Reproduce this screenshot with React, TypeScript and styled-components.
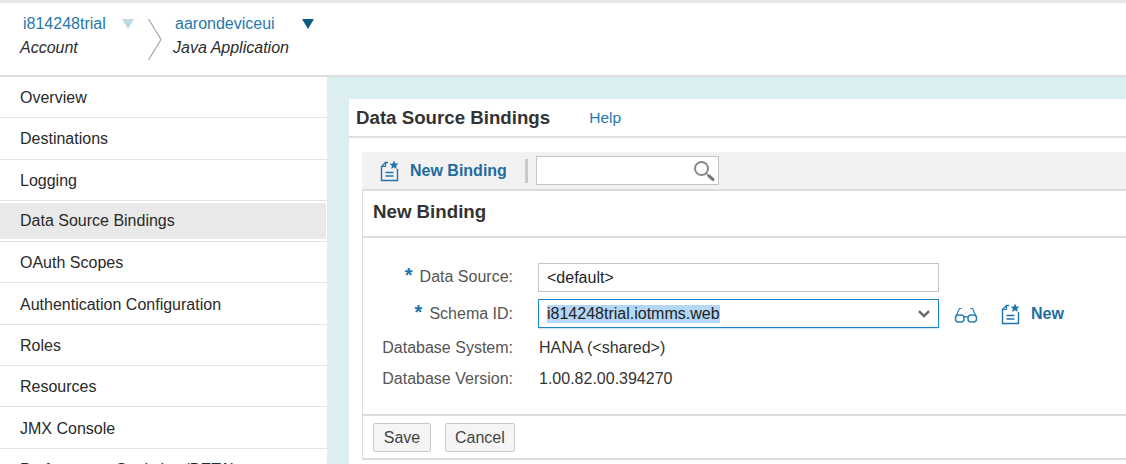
import React from 'react'
import styled, { createGlobalStyle } from 'styled-components'

const menuItems = [
  'Overview',
  'Destinations',
  'Logging',
  'Data Source Bindings',
  'OAuth Scopes',
  'Authentication Configuration',
  'Roles',
  'Resources',
  'JMX Console',
  'Performance Statistics (BETA)',
]

function NewDocIcon() {
  return (
    <svg width="22" height="22" viewBox="0 0 22 22" fill="none" stroke="#1f74ab" strokeWidth="1.4">
      <path d="M9 2.5H6.5L2.5 6.5V20.5H18.5V9" />
      <path d="M2.5 6.5H6.5V3" strokeWidth="1.2" />
      <path d="M6.5 12.5H14.5M6.5 16H14.5" />
      <path d="M15 0.5l1.3 2.9 3.2.3-2.4 2.1.7 3.1-2.8-1.6-2.8 1.6.7-3.1-2.4-2.1 3.2-.3z" fill="#1f74ab" stroke="none" />
    </svg>
  )
}

function GlassesIcon() {
  return (
    <svg width="24" height="18" viewBox="0 0 24 18" fill="none" stroke="#2a7fb5" strokeWidth="1.5">
      <rect x="1.5" y="9" width="8.5" height="7" rx="3" />
      <rect x="14" y="9" width="8.5" height="7" rx="3" />
      <path d="M10 11.5C11 10.5 13 10.5 14 11.5" />
      <path d="M2 10L5.5 2.5H7.5M22 10L18.5 2.5H16.5" strokeWidth="1.2" />
    </svg>
  )
}

function SearchIcon() {
  return (
    <svg width="24" height="24" viewBox="0 0 24 24" fill="none">
      <circle cx="9.5" cy="9.5" r="6.5" stroke="#8a8a8a" strokeWidth="2" />
      <path d="M14.5 14.5L17 17" stroke="#8a8a8a" strokeWidth="1.5" />
      <path d="M17 17L21 20.5" stroke="#777" strokeWidth="3" strokeLinecap="round" />
    </svg>
  )
}

function ChevronIcon() {
  return (
    <svg width="14" height="41" viewBox="0 0 14 41" fill="none" stroke="#a0a0a0" strokeWidth="1.1">
      <path d="M0.5 0L13 20.5L0.5 41" />
    </svg>
  )
}

function SelectArrow() {
  return (
    <svg width="12" height="8" viewBox="0 0 12 8" fill="none" stroke="#666" strokeWidth="2.4">
      <path d="M1 1.2L6 6L11 1.2" />
    </svg>
  )
}

export default function App() {
  return (
    <Page>
      <GlobalStyle />
      <TopBar>
        <Crumb width={125}>
          <CrumbName indent={23}>
            i814248trial
            <Caret color="#bcd9e6" left={99} />
          </CrumbName>
          <CrumbType>Account</CrumbType>
        </Crumb>
        <ChevronSlot>
          <ChevronIcon />
        </ChevronSlot>
        <Crumb width={170}>
          <CrumbName indent={22}>
            aarondeviceui
            <Caret color="#0f5b86" left={127} />
          </CrumbName>
          <CrumbType>Java Application</CrumbType>
        </Crumb>
      </TopBar>
      <Body>
        <Sidebar>
          {menuItems.map((item) => (
            <MenuRow key={item} selected={item === 'Data Source Bindings'}>
              <MenuLabel selected={item === 'Data Source Bindings'}>{item}</MenuLabel>
            </MenuRow>
          ))}
        </Sidebar>
        <Main>
          <Panel>
            <PanelHeader>
              <PanelTitle>Data Source Bindings</PanelTitle>
              <HelpLink>Help</HelpLink>
            </PanelHeader>
            <PanelBody>
              <Toolbar>
                <ToolButton>
                  <NewDocIcon />
                  <ActionText>New Binding</ActionText>
                </ToolButton>
                <ToolDivider />
                <SearchBox>
                  <SearchIcon />
                </SearchBox>
              </Toolbar>
              <Card>
                <CardTitle>New Binding</CardTitle>
                <Form>
                  <FormRow height={36}>
                    <Label>
                      <Star>*</Star>Data Source:
                    </Label>
                    <Field>&lt;default&gt;</Field>
                  </FormRow>
                  <FormRow height={35}>
                    <Label lower>
                      <Star>*</Star>Schema ID:
                    </Label>
                    <Field focused>
                      <Selected>i814248trial.iotmms.web</Selected>
                      <SelectArrow />
                    </Field>
                    <GlassesSlot>
                      <GlassesIcon />
                    </GlassesSlot>
                    <NewLink>
                      <NewDocIcon />
                      <ActionText>New</ActionText>
                    </NewLink>
                  </FormRow>
                  <FormRow height={31}>
                    <Label>Database System:</Label>
                    <Value>HANA (&lt;shared&gt;)</Value>
                  </FormRow>
                  <FormRow height={27}>
                    <Label>Database Version:</Label>
                    <Value>1.00.82.00.394270</Value>
                  </FormRow>
                </Form>
                <Footer>
                  <Button>Save</Button>
                  <Button>Cancel</Button>
                </Footer>
              </Card>
            </PanelBody>
          </Panel>
        </Main>
      </Body>
    </Page>
  )
}

const GlobalStyle = createGlobalStyle`
  html, body {
    margin: 0;
    padding: 0;
    background: #fff;
  }
  * {
    box-sizing: border-box;
  }
`

const Page = styled.div`
  width: 1126px;
  height: 464px;
  overflow: hidden;
  display: flex;
  flex-direction: column;
  font-family: 'Liberation Sans', Arial, sans-serif;
  font-size: 16px;
  color: #333;
  border-top: 3px solid #e6e6e6;
`

const TopBar = styled.div`
  height: 74px;
  flex-shrink: 0;
  display: flex;
  background: #fff;
  border-bottom: 2px solid #dedede;
`

const Crumb = styled.div<{ width: number }>`
  width: ${(props) => props.width}px;
  padding-top: 13px;
  flex-shrink: 0;
`

const CrumbName = styled.div<{ indent: number }>`
  position: relative;
  height: 16px;
  line-height: 16px;
  margin-left: ${(props) => props.indent}px;
  color: #2878ab;
  white-space: nowrap;
`

const CrumbType = styled.div`
  margin-top: 7px;
  line-height: 17px;
  font-style: italic;
  color: #2c2c2c;
  padding-left: 20px;
  white-space: nowrap;
`

const Caret = styled.span<{ color: string; left: number }>`
  position: absolute;
  top: 3px;
  left: ${(props) => props.left}px;
  width: 0;
  height: 0;
  border-left: 6.5px solid transparent;
  border-right: 6.5px solid transparent;
  border-top: 10px solid ${(props) => props.color};
`

const ChevronSlot = styled.div`
  width: 28px;
  padding: 16px 0 0 23px;
  flex-shrink: 0;
`

const Body = styled.div`
  flex: 1;
  display: flex;
  min-height: 0;
`

const Sidebar = styled.nav`
  width: 327px;
  flex-shrink: 0;
  background: #fff;
`

const MenuRow = styled.div<{ selected: boolean }>`
  height: 41.3px;
  padding-top: 2px;
  border-bottom: 1.5px solid #e3e3e3;
  display: flex;
  ${(props) => props.selected && 'padding: 2px 1px 2px 0;'}
`

const MenuLabel = styled.div<{ selected: boolean }>`
  flex: 1;
  display: flex;
  align-items: center;
  padding-left: 20px;
  color: #2a2a2a;
  background: ${(props) => (props.selected ? '#e9e9e9' : 'transparent')};
  white-space: nowrap;
`

const Main = styled.main`
  flex: 1;
  min-width: 0;
  background: #dbeef2;
  padding: 22px 0 0 22px;
`

const Panel = styled.section`
  height: 100%;
  background: #fff;
`

const PanelHeader = styled.header`
  height: 39px;
  display: flex;
  align-items: center;
  padding-left: 7px;
  border-bottom: 2px solid #dfdfdf;
`

const PanelTitle = styled.h1`
  margin: 0;
  font-size: 18.7px;
  font-weight: 700;
  color: #333;
`

const HelpLink = styled.a`
  margin-left: 39px;
  font-size: 15.5px;
  color: #2878ab;
`

const PanelBody = styled.div`
  padding: 14px 0 0 13px;
`

const Toolbar = styled.div`
  height: 37px;
  display: flex;
  align-items: center;
  background: #f2f2f2;
  padding-left: 17px;
`

const ToolButton = styled.div`
  display: flex;
  align-items: center;
  gap: 9px;
`

const ActionText = styled.span`
  font-weight: 700;
  font-size: 16px;
  color: #1f6c9f;
`

const ToolDivider = styled.span`
  width: 3px;
  height: 24px;
  margin: 0 8px 0 18px;
  background: #c9c9c9;
`

const SearchBox = styled.div`
  width: 183px;
  height: 29px;
  background: #fff;
  border: 1px solid #c4c4c4;
  display: flex;
  align-items: center;
  justify-content: flex-end;
  padding-right: 2px;
`

const Card = styled.div`
  height: 271px;
  border: 1px solid #dcdcdc;
  border-width: 2px 0 2px 1px;
  background: #fff;
`

const CardTitle = styled.div`
  height: 47px;
  display: flex;
  align-items: center;
  padding: 0 0 3px 10px;
  font-size: 18.7px;
  font-weight: 700;
  color: #333;
  border-bottom: 2px solid #dcdcdc;
`

const Form = styled.div`
  height: 178px;
  padding-top: 25px;
  border-bottom: 2px solid #dcdcdc;
`

const FormRow = styled.div<{ height: number }>`
  height: ${(props) => props.height}px;
  display: flex;
  align-items: flex-start;
`

const Label = styled.div<{ lower?: boolean }>`
  width: 150px;
  height: 29px;
  line-height: ${(props) => (props.lower ? 29 : 27)}px;
  text-align: right;
  color: #555;
  white-space: nowrap;
  flex-shrink: 0;
`

const Star = styled.span`
  color: #1f74ab;
  font-weight: 700;
  font-size: 20px;
  line-height: 14px;
  margin-right: 7px;
`

const Field = styled.div<{ focused?: boolean }>`
  width: 401px;
  height: 29px;
  margin-left: 25px;
  flex-shrink: 0;
  display: flex;
  align-items: center;
  justify-content: space-between;
  padding: 0 8px;
  color: #222;
  background: #fff;
  border: 1px solid ${(props) => (props.focused ? '#1b86c9' : '#c4c4c4')};
  ${(props) => props.focused && 'box-shadow: 0 1px 1px #d5e8f5;'}
`

const Selected = styled.span`
  background: #b4d7f5;
  line-height: 18px;
`

const GlassesSlot = styled.div`
  margin-left: 15px;
  padding-top: 7px;
`

const NewLink = styled.div`
  margin-left: 22px;
  padding-top: 4px;
  display: flex;
  gap: 9px;
  line-height: 22px;
`

const Value = styled.div`
  margin-left: 26px;
  height: 29px;
  line-height: 27px;
  color: #333;
  white-space: nowrap;
`

const Footer = styled.div`
  display: flex;
  gap: 14px;
  padding: 7px 0 0 10px;
`

const Button = styled.button`
  height: 29px;
  min-width: 58px;
  padding: 0 9px;
  font-family: inherit;
  font-size: 16px;
  color: #444;
  background: #f5f5f5;
  border: 1px solid #c9c9c9;
  border-radius: 2px;
`
